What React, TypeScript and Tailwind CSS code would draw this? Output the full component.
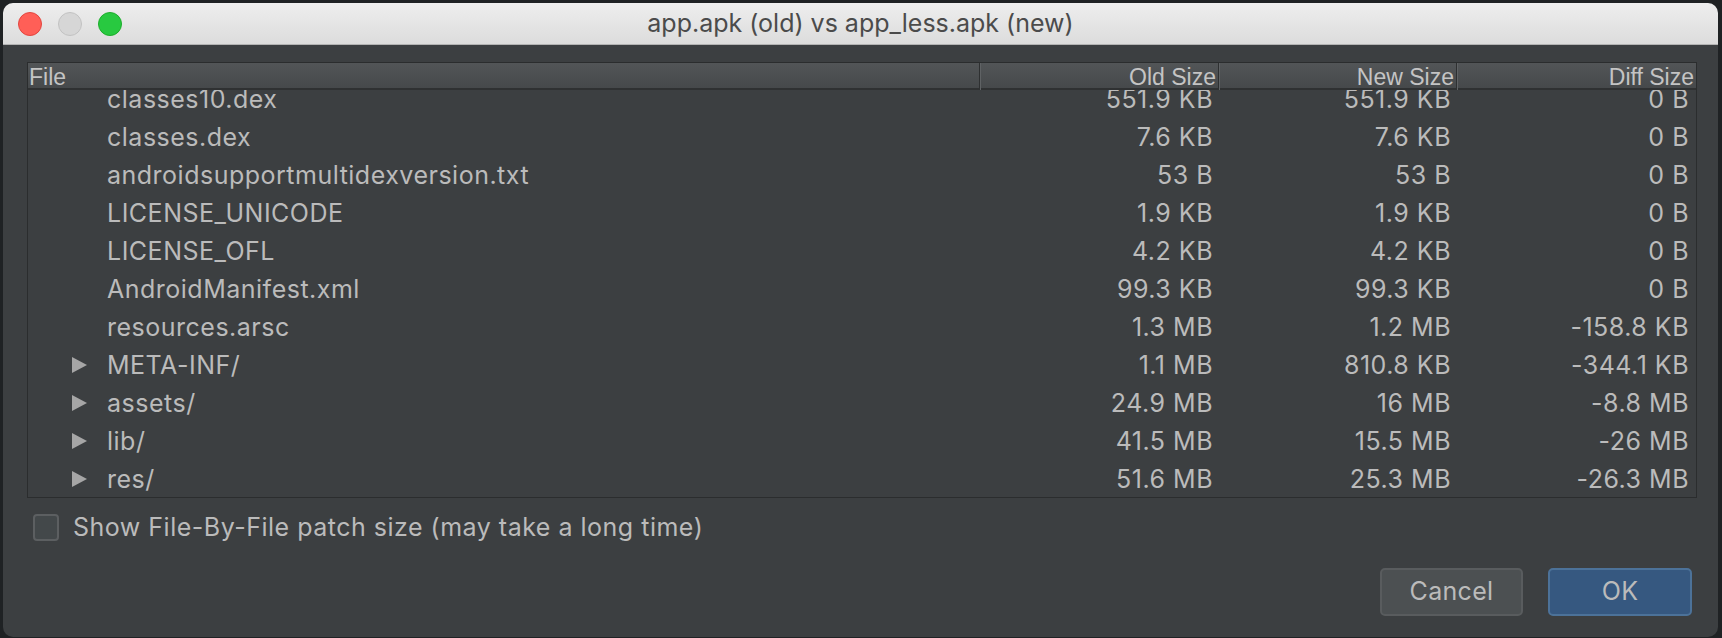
import React from 'react'

type Row = { name: string; old: string; next: string; diff: string; folder?: boolean }

const rows: Row[] = [
  { name: 'classes10.dex', old: '551.9 KB', next: '551.9 KB', diff: '0 B' },
  { name: 'classes.dex', old: '7.6 KB', next: '7.6 KB', diff: '0 B' },
  { name: 'androidsupportmultidexversion.txt', old: '53 B', next: '53 B', diff: '0 B' },
  { name: 'LICENSE_UNICODE', old: '1.9 KB', next: '1.9 KB', diff: '0 B' },
  { name: 'LICENSE_OFL', old: '4.2 KB', next: '4.2 KB', diff: '0 B' },
  { name: 'AndroidManifest.xml', old: '99.3 KB', next: '99.3 KB', diff: '0 B' },
  { name: 'resources.arsc', old: '1.3 MB', next: '1.2 MB', diff: '-158.8 KB' },
  { name: 'META-INF/', old: '1.1 MB', next: '810.8 KB', diff: '-344.1 KB', folder: true },
  { name: 'assets/', old: '24.9 MB', next: '16 MB', diff: '-8.8 MB', folder: true },
  { name: 'lib/', old: '41.5 MB', next: '15.5 MB', diff: '-26 MB', folder: true },
  { name: 'res/', old: '51.6 MB', next: '25.3 MB', diff: '-26.3 MB', folder: true },
]

const cols = 'grid grid-cols-[953px_239px_238px_1fr]'
const ui = "font-['Inter',sans-serif]"
const hdr = "font-['Liberation_Sans',Arial,sans-serif]"

function HeaderCell({ label, last }: { label: string; last?: boolean }) {
  return (
    <div className="flex h-full items-center justify-end">
      <span className="pr-[2px] pt-[2px] leading-[25px]">{label}</span>
      {!last && <div className="h-full w-[2px] border-l border-[#2e3031] bg-[#5f6264]" />}
    </div>
  )
}

function TableRow({ row }: { row: Row }) {
  return (
    <div className={`${cols} h-[38px] items-center leading-[38px]`}>
      <div className="flex items-center">
        {row.folder ? (
          <svg width="15" height="16" viewBox="0 0 15 16" className="ml-[44px] mr-[20px] shrink-0">
            <polygon points="0,0 15,8 0,16" fill="#a6a6a6" />
          </svg>
        ) : (
          <div className="w-[79px] shrink-0" />
        )}
        <span>{row.name}</span>
      </div>
      <div className="pr-[7px] text-right">{row.old}</div>
      <div className="pr-[7px] text-right">{row.next}</div>
      <div className="pr-[7px] text-right">{row.diff}</div>
    </div>
  )
}

export default function App() {
  return (
    <div className="h-[638px] w-[1722px] bg-[#1f2224] pl-[3px] pt-[3px]">
      <div className="flex h-[634px] w-[1715px] flex-col overflow-hidden rounded-[10px] bg-[#3c3f41]">
        <div className="grid h-[42px] grid-cols-[1fr_auto_1fr] items-center border-b border-[#b3b3b3] bg-gradient-to-b from-[#eeeeee] to-[#dcdcdc]">
          <div className="flex items-center gap-[16px] pl-[15px]">
            <div className="h-[24px] w-[24px] rounded-full border border-[#e2463f] bg-[#ff5f57]" />
            <div className="h-[24px] w-[24px] rounded-full border border-[#c2c2c2] bg-[#d6d6d6]" />
            <div className="h-[24px] w-[24px] rounded-full border border-[#1dad2b] bg-[#28c940]" />
          </div>
          <div className={`${ui} text-[25px] text-[#4b4b4b]`}>app.apk (old) vs app_less.apk (new)</div>
          <div />
        </div>

        <div className="flex flex-1 flex-col pl-[24px] pr-[21px] pt-[17px] pb-[21px]">
          <div className="flex h-[436px] flex-col border border-[#2b2d2e]">
            <div className={`${cols} ${hdr} h-[27px] border-b-2 border-[#2f3132] bg-gradient-to-b from-[#525557] to-[#46494b] text-[23px] text-[#c4c4c4]`}>
              <div className="flex h-full items-center justify-between">
                <span className="pl-[1px] pt-[2px] leading-[25px]">File</span>
                <div className="h-full w-[2px] border-l border-[#2e3031] bg-[#5f6264]" />
              </div>
              <HeaderCell label="Old Size" />
              <HeaderCell label="New Size" />
              <HeaderCell label="Diff Size" last />
            </div>
            <div className={`${ui} flex-1 overflow-hidden text-[25px] tracking-[0.5px] text-[#bbbbbb]`}>
              <div className="-mt-[10px]">
                {rows.map((r) => (
                  <TableRow key={r.name} row={r} />
                ))}
              </div>
            </div>
          </div>

          <label className="mt-[16px] flex items-center gap-[14px] pl-[6px]">
            <div className="h-[27px] w-[26px] rounded-[4px] border-2 border-[#5c5f61] bg-[#43484a]" />
            <span className={`${ui} text-[25px] leading-[27px] tracking-[0.5px] text-[#bbbbbb]`}>
              Show File-By-File patch size (may take a long time)
            </span>
          </label>

          <div className={`${ui} mt-auto flex justify-end gap-[25px] pr-[5px] text-[25px] tracking-[0.3px] text-[#bbbbbb]`}>
            <button className="h-[48px] w-[143px] rounded-[5px] border-2 border-[#595c5e] bg-[#4c5052]">Cancel</button>
            <button className="h-[48px] w-[144px] rounded-[5px] border-2 border-[#4c7299] bg-[#365880]">OK</button>
          </div>
        </div>
      </div>
    </div>
  )
}
